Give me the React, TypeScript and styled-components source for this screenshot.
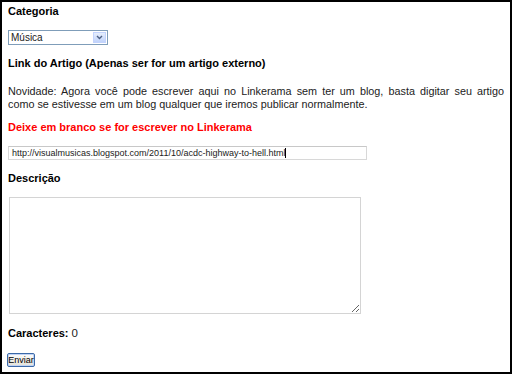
import React from "react";
import styled, { createGlobalStyle } from "styled-components";

const Global = createGlobalStyle`
  html, body { margin: 0; padding: 0; background: #fff; }
  body { font-family: "Liberation Sans", Arial, sans-serif; }
`;

const Frame = styled.div`
  box-sizing: border-box;
  width: 512px;
  height: 374px;
  border: 2px solid #000;
  padding: 3px 6px 0 6px;
  display: flex;
  flex-direction: column;
  align-items: flex-start;
  color: #000;
`;

const Label = styled.div<{ $red?: boolean; $mt?: number }>`
  font-size: 11px;
  font-weight: bold;
  line-height: 13px;
  color: ${(p) => (p.$red ? "#f00" : "#000")};
  margin-top: ${(p) => p.$mt ?? 0}px;
`;

const SelectBox = styled.div`
  margin-top: 12px;
  box-sizing: border-box;
  width: 100px;
  height: 15px;
  border: 1px solid #7f9db9;
  display: flex;
  align-items: stretch;
  background: #fff;
`;

const SelectText = styled.div`
  flex: 1;
  font-size: 10px;
  line-height: 13px;
  padding-left: 2px;
  color: #222;
`;

const ArrowBtn = styled.div`
  width: 13px;
  margin: 1px;
  box-sizing: border-box;
  border: 1px solid #c3d3fd;
  background: linear-gradient(#e6eefc, #c1d3fb);
  display: flex;
  align-items: center;
  justify-content: center;
`;

const Para = styled.div`
  margin: 15px 0 0 0;
  width: 496px;
  font-size: 10.8px;
  line-height: 13px;
  color: #222;
`;

const Line = styled.div<{ $full?: boolean }>`
  white-space: nowrap;
  text-align: ${(p) => (p.$full ? "justify" : "left")};
  text-align-last: ${(p) => (p.$full ? "justify" : "left")};
`;

const Field = styled.div`
  margin-top: 12px;
  box-sizing: border-box;
  width: 359px;
  height: 14px;
  border: 1px solid #d8d8d8;
  border-top-color: #c8c8c8;
  font-size: 9px;
  line-height: 12px;
  padding-left: 3px;
  color: #222;
  white-space: nowrap;
  display: flex;
  align-items: center;
`;

const Caret = styled.span`
  display: inline-block;
  width: 1px;
  height: 10px;
  background: #000;
`;

const Area = styled.textarea`
  margin: 12px 0 0 1px;
  box-sizing: border-box;
  width: 352px;
  height: 117px;
  border: 1px solid #d4d4d4;
  outline: none;
  resize: both;
  padding: 0;
  background: #fff;
`;

const Count = styled.div`
  margin-top: 13px;
  font-size: 11px;
  line-height: 13px;
  font-weight: bold;
`;

const CountValue = styled.span`
  font-weight: normal;
  font-size: 11.5px;
  color: #222;
`;

const Button = styled.button`
  margin-top: 13px;
  margin-left: -1px;
  box-sizing: border-box;
  width: 28px;
  height: 14px;
  padding: 0;
  font-family: "Liberation Sans", Arial, sans-serif;
  font-size: 9px;
  line-height: 10px;
  color: #000;
  border: 1px solid #3c6aa8;
  border-radius: 2px;
  background: linear-gradient(#fdfdfb, #e4e2d8);
  box-shadow: inset 0 0 0 1px #c0d3f5;
`;

export default function App() {
  return (
    <>
      <Global />
      <Frame>
        <Label>Categoria</Label>
        <SelectBox>
          <SelectText>Música</SelectText>
          <ArrowBtn>
            <svg width="7" height="5" viewBox="0 0 7 5">
              <path d="M1 1 L3.5 3.5 L6 1" fill="none" stroke="#4d6185" strokeWidth="1.4" />
            </svg>
          </ArrowBtn>
        </SelectBox>
        <Label $mt={12}>Link do Artigo (Apenas ser for um artigo externo)</Label>
        <Para>
          <Line $full>
            Novidade: Agora você pode escrever aqui no Linkerama sem ter um blog, basta digitar seu artigo
          </Line>
          <Line>como se estivesse em um blog qualquer que iremos publicar normalmente.</Line>
        </Para>
        <Label $red $mt={10}>Deixe em branco se for escrever no Linkerama</Label>
        <Field>
          http://visualmusicas.blogspot.com/2011/10/acdc-highway-to-hell.html
          <Caret />
        </Field>
        <Label $mt={12}>Descrição</Label>
        <Area />
        <Count>
          Caracteres: <CountValue>0</CountValue>
        </Count>
        <Button>Enviar</Button>
      </Frame>
    </>
  );
}
